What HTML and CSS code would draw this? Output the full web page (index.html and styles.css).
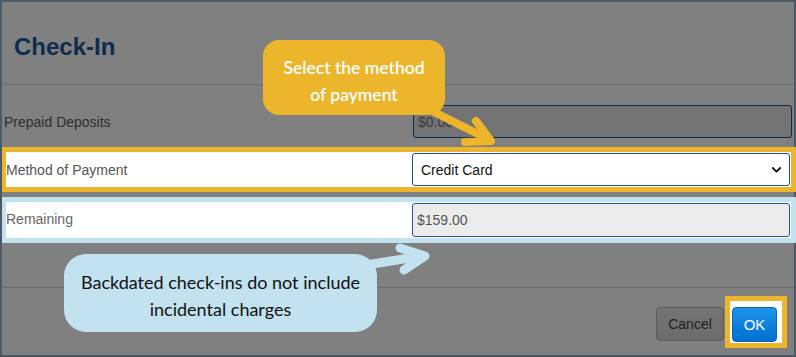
FILE: index.html
```html
<html>

<head>
    <title>Check-In</title>
    <link rel="stylesheet" href="styles.css">
</head>

<body>
    <div class="page">
        <div class="frame">
            <div class="dialog-header">
                <h1 class="title">Check-In</h1>
            </div>
            <div class="dialog-body">
                <div class="row row-plain">
                    <label class="row-label">Prepaid Deposits</label>
                    <input class="field field-dim" type="text" value="$0.00" readonly>
                </div>
                <div class="row row-mark row-yellow">
                    <label class="row-label">Method of Payment</label>
                    <div class="field field-select">
                        <span>Credit Card</span>
                        <svg class="chevron" width="11" height="8" viewBox="0 0 11 8">
                            <path d="M1.8 2 L5.5 5.6 L9.2 2" fill="none" stroke="#111" stroke-width="1.8" stroke-linecap="round" stroke-linejoin="round"/>
                        </svg>
                    </div>
                </div>
                <div class="row row-mark row-blue">
                    <label class="row-label">Remaining</label>
                    <input class="field field-readonly" type="text" value="$159.00" readonly>
                </div>
            </div>
            <div class="dialog-footer">
                <button class="btn btn-cancel">Cancel</button>
                <div class="ok-frame">
                    <button class="btn btn-ok">OK</button>
                </div>
            </div>
        </div>

        <!-- annotation arrows -->
        <svg class="arrows" width="796" height="357" viewBox="0 0 796 357">
            <g fill="none" stroke-linecap="round" stroke-linejoin="round">
                <path d="M426 108 L488 139" stroke="#ecb52b" stroke-width="8"/>
                <path d="M476 121 L491 141 L465 142" stroke="#ecb52b" stroke-width="8"/>
                <path d="M366 265 L422 256" stroke="#c3e2ef" stroke-width="9"/>
                <path d="M400 248 L425 256 L404 270" stroke="#c3e2ef" stroke-width="9"/>
            </g>
        </svg>

        <div class="callout callout-yellow">Select the method<br>of payment</div>
        <div class="callout callout-blue">Backdated check-ins do not include<br>incidental charges</div>
    </div>
</body>

</html>
```

FILE: styles.css
```css
body {
    margin: 0;
    padding: 0;
    font-family: "Liberation Sans", Arial, sans-serif;
}

.page {
    position: relative;
    width: 796px;
    height: 357px;
    overflow: hidden;
}

.frame {
    width: 796px;
    height: 357px;
    box-sizing: border-box;
    border: 2px solid #4b5a63;
    background-color: #808080;
}

.dialog-header {
    height: 83px;
    box-sizing: border-box;
    padding: 33px 0 0 12px;
    border-bottom: 1px solid #6e6e6e;
}

.title {
    margin: 0;
    font-size: 24px;
    line-height: 24px;
    font-weight: bold;
    color: #0e2d4e;
}

.row {
    display: flex;
    align-items: center;
}

.row-label {
    flex: 1;
    font-size: 14px;
    color: #555555;
}

.row-plain {
    margin-top: 20px;
}

.row-plain .row-label {
    padding-left: 2px;
    color: #2e2e2e;
}

.row-plain .field {
    margin-right: 2px;
}

.row-mark {
    margin-right: -2px;
    padding: 1px 0;
    background-color: #ffffff;
    border-style: solid;
    border-width: 5px 5px 5px 4px;
}

.row-mark .field {
    margin-right: 1px;
}

.row-yellow {
    margin-top: 9px;
    border-color: #ecb52b;
}

.row-blue {
    margin-top: 5px;
    border-color: #c3e2ef;
}

.row-blue .row-label {
    color: #666666;
    padding-bottom: 2px;
}

.field {
    width: 379px;
    height: 33px;
    box-sizing: border-box;
    padding: 0 8px 0 4px;
    border: 1px solid #12294a;
    border-radius: 3px;
    font-family: "Liberation Sans", Arial, sans-serif;
    font-size: 14px;
    outline: none;
}

.field-dim {
    background-color: #737373;
    color: #3a3a3a;
}

.field-select {
    width: 378px;
    display: flex;
    align-items: center;
    justify-content: space-between;
    padding-left: 8px;
    border-color: #1f4e8c;
    background-color: #ffffff;
    color: #111111;
}

.chevron {
    margin-right: -1px;
}

.field-readonly {
    width: 378px;
    height: 34px;
    background-color: #ebebeb;
    border-color: #2a5590;
    color: #555555;
}

.dialog-footer {
    margin-top: 44px;
    display: flex;
    justify-content: flex-end;
    align-items: flex-start;
    padding: 8px 7px 0 0;
    border-top: 1px solid #6e6e6e;
}

.btn {
    height: 34px;
    border-radius: 4px;
    font-family: "Liberation Sans", Arial, sans-serif;
    cursor: pointer;
}

.btn-cancel {
    width: 68px;
    margin-top: 11px;
    margin-right: 1px;
    background: linear-gradient(#747474, #6c6c6c);
    border: 1px solid #5c5c5c;
    color: #1e1e1e;
    font-size: 14px;
}

.ok-frame {
    border: 5px solid #ecb52b;
    background-color: #ffffff;
    padding: 6px 5px 1px 2px;
}

.btn-ok {
    display: block;
    width: 45px;
    height: 35px;
    background: linear-gradient(#1d93ea, #0070cf);
    border: 1px solid #0a66b8;
    color: #ffffff;
    font-size: 15px;
}

.arrows {
    position: absolute;
    left: 0;
    top: 0;
    pointer-events: none;
}

.callout {
    position: absolute;
    box-sizing: border-box;
    display: flex;
    align-items: center;
    justify-content: center;
    text-align: center;
    font-family: Lato, "Open Sans", sans-serif;
}

.callout-yellow {
    left: 263px;
    top: 40px;
    width: 182px;
    height: 75px;
    padding-top: 7px;
    border-radius: 16px;
    background-color: #ecb52b;
    color: #ffffff;
    font-size: 17.5px;
    font-weight: 600;
    line-height: 27px;
}

.callout-blue {
    left: 64px;
    top: 254px;
    width: 313px;
    height: 78px;
    padding-top: 6px;
    border-radius: 22px;
    background-color: #c3e2ef;
    color: #111111;
    font-size: 18px;
    line-height: 27px;
}
```
